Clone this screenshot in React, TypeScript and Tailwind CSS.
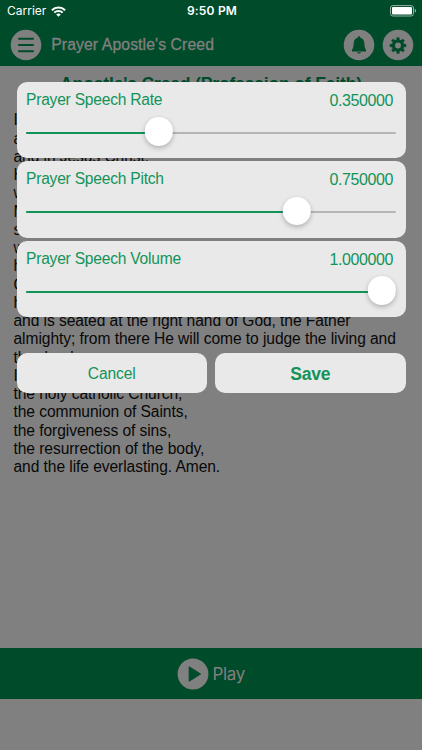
import React from "react";

const prayer = [
  "I believe in God, the Father",
  "almighty, Creator of heaven and earth,",
  "and in Jesus Christ.",
  "His only Son, our Lord,",
  "who was conceived by the Holy Spirit, born of the Virgin",
  "Mary,",
  "suffered under Pontius Pilate,",
  "was crucified, died and was buried;",
  "he descended into hell;",
  "On the third day He rose again from the dead;",
  "he ascended into heaven,",
  "and is seated at the right hand of God, the Father",
  "almighty; from there He will come to judge the living and",
  "the dead.",
  "I believe in the Holy Spirit,",
  "the holy catholic Church,",
  "the communion of Saints,",
  "the forgiveness of sins,",
  "the resurrection of the body,",
  "and the life everlasting. Amen.",
];

const settings = [
  { label: "Prayer Speech Rate", value: 0.35, fill: 133 },
  { label: "Prayer Speech Pitch", value: 0.75, fill: 270.5 },
  { label: "Prayer Speech Volume", value: 1, fill: 356 },
];

const gearTeeth = [0, 45, 90, 135, 180, 225, 270, 315];

function SettingCard({ label, value, fill }: { label: string; value: number; fill: number }) {
  return (
    <section className="h-[76.5px] rounded-[10px] bg-[#e9e9e9] px-[9.5px] pt-[8px]">
      <div className="flex h-[20px] justify-between leading-[20px] text-[#12935a]">
        <span className="text-[15.6px] tracking-[-0.23px]">{label}</span>
        <span className="mr-[3px] pt-[1px] text-[16px] tracking-[-0.4px]">{value.toFixed(6)}</span>
      </div>
      <div className="relative mt-[22px] h-[2px] rounded-full bg-[#b5b5b5]">
        <div className="h-full rounded-full bg-[#12935a]" style={{ width: fill }} />
        <div
          className="absolute top-[-14.4px] size-[28.4px] -translate-x-1/2 rounded-full bg-white shadow-[0_2px_5px_rgba(0,0,0,0.25)]"
          style={{ left: fill }}
        />
      </div>
    </section>
  );
}

export default function App() {
  return (
    <div className="relative flex h-[750px] w-[422px] flex-col overflow-hidden bg-[#808080] font-['Liberation_Sans',Arial,sans-serif]">
      <header className="h-[65.5px] bg-[#004b2a]">
        <div className="grid h-[22px] grid-cols-3 items-center pl-[7px] pr-[5px] font-[Inter,sans-serif] text-white">
          <div className="flex items-center gap-[5px] text-[12px]">
            Carrier
            <svg width="15" height="11" viewBox="0 0 15 11" fill="none" stroke="white" strokeWidth="2">
              <path d="M.9 4.2a9.3 9.3 0 0 1 13.2 0M3.3 6.6a6 6 0 0 1 8.4 0" />
              <path d="M7.5 10.8 5.2 8.5a3.3 3.3 0 0 1 4.6 0Z" fill="white" stroke="none" />
            </svg>
          </div>
          <div className="text-center text-[12px] font-semibold tracking-[0.2px]">9:50 PM</div>
          <div className="flex justify-end">
            <svg width="27" height="12" viewBox="0 0 27 12">
              <rect x=".5" y=".6" width="23" height="10.4" rx="2.4" fill="none" stroke="#91b5a4" />
              <rect x="2" y="2" width="20" height="7.6" rx="1" fill="white" />
              <path d="M24.8 3.8c1.7.6 1.7 3.4 0 4Z" fill="#91b5a4" />
            </svg>
          </div>
        </div>
        <div className="flex h-[43.5px] items-center pl-[9.7px] pr-[8px] pt-[2px]">
          <svg width="32" height="32" viewBox="0 0 32 32">
            <circle cx="16" cy="16" r="15.3" fill="#808080" />
            <path d="M9 9.8h14M9 16h14M9 22.2h14" stroke="#004b2a" strokeWidth="2.1" strokeLinecap="round" />
          </svg>
          <h1 className="ml-[9.5px] flex-1 whitespace-nowrap pt-[1px] text-[15.8px] tracking-[0.08px] text-[#808080] [-webkit-text-stroke:0.3px_#808080]">Prayer Apostle's Creed</h1>
          <svg width="32" height="32" viewBox="0 0 32 32" fill="#004b2a">
            <circle cx="16" cy="16" r="15.3" fill="#808080" />
            <path d="M16 7.2c.9 0 1.3.7 1.3 1.6 2.6.6 3.8 2.6 4 5.3.2 4 .6 5.3 1.7 6.7v1.7H9v-1.7c1.1-1.4 1.5-2.7 1.7-6.7.2-2.7 1.4-4.7 4-5.3 0-.9.4-1.6 1.3-1.6ZM14 23.2h4c-.3 1-1 1.4-2 1.4s-1.7-.4-2-1.4Z" />
          </svg>
          <svg className="ml-[7px]" width="32" height="32" viewBox="0 0 32 32">
            <circle cx="16" cy="16" r="15.3" fill="#808080" />
            <circle cx="16" cy="16.5" r="4.5" fill="none" stroke="#004b2a" strokeWidth="3.1" />
            {gearTeeth.map((angle) => (
              <path key={angle} d="M14.3 11.5 14.8 8.4h2.4l.5 3.1Z" fill="#004b2a" stroke="#004b2a" strokeWidth=".3" transform={`rotate(${angle} 16 16.5)`} />
            ))}
          </svg>
        </div>
      </header>

      <main className="flex-1 px-[13.5px] pt-[7.5px]">
        <h2 className="text-center text-[17.6px] font-bold leading-[22px] tracking-[-0.2px] text-[#004b2a]">Apostle's Creed (Profession of Faith)</h2>
        <div className="mt-[16.4px] whitespace-nowrap text-[15.6px] leading-[18.25px] tracking-[-0.075px] text-[#080808]">
          {prayer.map((line) => (
            <p key={line}>{line}</p>
          ))}
        </div>
      </main>

      <footer className="mb-[51px] flex h-[51px] items-center justify-center bg-[#004b2a] text-[#808080]">
        <svg width="32" height="32" viewBox="0 0 32 32">
          <circle cx="16" cy="16" r="15.4" fill="#808080" />
          <path d="M12.2 8.8v14.4L23.6 16Z" fill="#004b2a" stroke="#004b2a" strokeLinejoin="round" />
        </svg>
        <span className="ml-[3.5px] pt-[2px] font-[Inter,sans-serif] text-[17px] tracking-[-0.3px]">Play</span>
      </footer>

      <div className="absolute left-[16.5px] top-[81.5px] w-[389px]">
        <div className="flex flex-col gap-[3px]">
          {settings.map((s) => (
            <SettingCard key={s.label} {...s} />
          ))}
        </div>
        <div className="mt-[35.5px] grid grid-cols-2 gap-[8px] text-[#12935a]">
          <button className="h-[40.5px] rounded-[10px] bg-[#e9e9e9] pt-[1px] text-[15.6px] tracking-[-0.1px]">Cancel</button>
          <button className="h-[40.5px] rounded-[10px] bg-[#e9e9e9] pt-[2px] text-[17.5px] font-bold tracking-[-0.2px]">Save</button>
        </div>
      </div>
    </div>
  );
}
